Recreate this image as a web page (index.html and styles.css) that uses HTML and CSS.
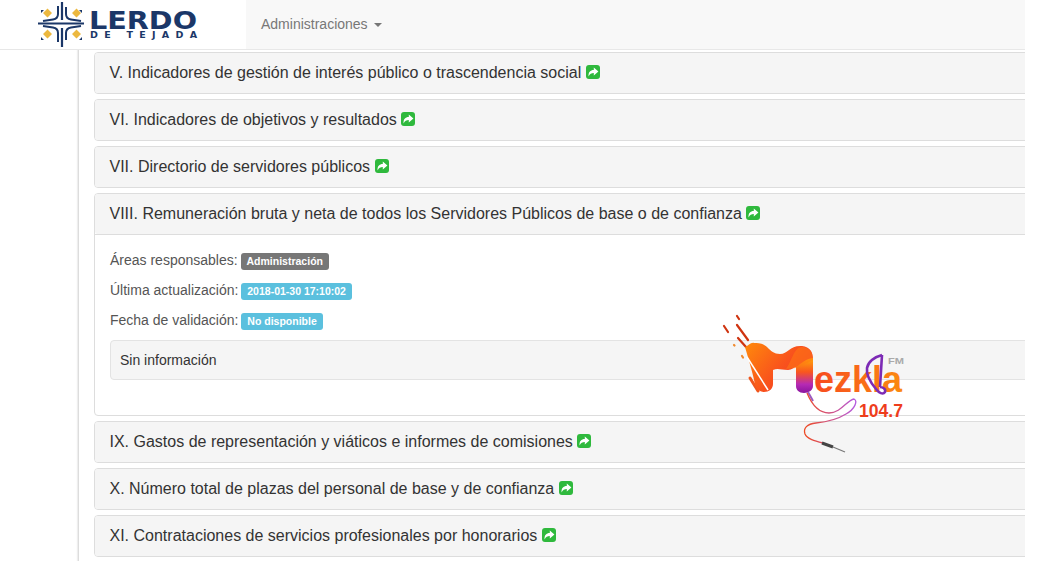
FILE: index.html
```html
<!DOCTYPE html>
<html lang="en">
<head>
    <meta charset="UTF-8">
    <meta name="viewport" content="width=device-width, initial-scale=1.0">
    <title>Transparencia - Lerdo de Tejada</title>
    <link rel="stylesheet" href="styles.css">
</head>
<body>
    <svg class="sprites" width="0" height="0">
        <symbol id="share" viewBox="0 0 14 14">
            <rect width="14" height="14" rx="3" fill="#2fb93d"/>
            <path d="M2.6 11.4c-.5-4 1.800-6.300 5.200-6.300V2.400L12.400 6.500 7.800 10.600V8c-2.400 0-4 .8-5.200 3.400z" fill="#fff"/>
        </symbol>
    </svg>
    <div class="page">
        <!-- Top bar -->
        <nav class="navbar">
            <a class="brand">
                <svg class="brand-logo" width="246" height="49" viewBox="0 0 246 49">
                    <path d="M43 13l4.500-4.500 4.500 4.500-4.500 4.500zM72 13l4.500-4.500 4.500 4.500-4.500 4.500zM43 34l4.500-4.500 4.500 4.500-4.500 4.500zM72 34l4.500-4.500 4.500 4.500-4.500 4.500z" fill="#ecb83f"/>
                    <path d="M41 10l3 0-3 3zM82 10l-3 0 3 3zM41 37l3 3h-3zM82 37l-3 3h3z" fill="#1b3768"/>
                    <g fill="none" stroke="#1b3768" stroke-width="2">
                        <path d="M58 6v8c0 3-2 5-5 5.500L43 21M66 7v7c0 3 2 5 5 5.500L81 21"/>
                        <path d="M43 26l10 1.500c3 .5 5 2.500 5 5.500v9M81 26l-10 1.500c-3 .5-5 2.500-5 5.500v7"/>
                        <path d="M38 23.500H84M62 2v18M62 28v19" stroke-width="2.200"/>
                    </g>
                    <text class="brand-name" x="89" y="29" textLength="108" lengthAdjust="spacingAndGlyphs">LERDO</text>
                    <text class="brand-sub" x="90" y="38" textLength="107">DE TEJADA</text>
                </svg>
            </a>
            <a class="nav-link">Administraciones <span class="caret"></span></a>
        </nav>

        <div class="layout">
            <div class="sidebar"></div>
            <main class="content">
                <div class="panel">
                    <div class="panel-heading">V. Indicadores de gestión de interés público o trascendencia social <svg class="share"><use href="#share"/></svg></div>
                </div>
                <div class="panel">
                    <div class="panel-heading">VI. Indicadores de objetivos y resultados <svg class="share"><use href="#share"/></svg></div>
                </div>
                <div class="panel">
                    <div class="panel-heading">VII. Directorio de servidores públicos <svg class="share"><use href="#share"/></svg></div>
                </div>
                <div class="panel">
                    <div class="panel-heading">VIII. Remuneración bruta y neta de todos los Servidores Públicos de base o de confianza <svg class="share"><use href="#share"/></svg></div>
                    <div class="panel-body">
                        <p class="meta">Áreas responsables: <span class="label label-gray">Administración</span></p>
                        <p class="meta">Última actualización: <span class="label label-info">2018-01-30 17:10:02</span></p>
                        <p class="meta">Fecha de validación: <span class="label label-info">No disponible</span></p>
                        <div class="well">Sin información</div>
                    </div>
                </div>
                <div class="panel">
                    <div class="panel-heading">IX. Gastos de representación y viáticos e informes de comisiones <svg class="share"><use href="#share"/></svg></div>
                </div>
                <div class="panel">
                    <div class="panel-heading">X. Número total de plazas del personal de base y de confianza <svg class="share"><use href="#share"/></svg></div>
                </div>
                <div class="panel">
                    <div class="panel-heading">XI. Contrataciones de servicios profesionales por honorarios <svg class="share"><use href="#share"/></svg></div>
                </div>
            </main>
        </div>
    </div>

    <!-- Station watermark over the page -->
    <svg class="watermark" width="200" height="150" viewBox="720 310 200 150">
        <defs>
            <linearGradient id="mGrad" x1="0" y1="0" x2="1" y2="0.6">
                <stop offset="0" stop-color="#ff8a0c"/>
                <stop offset="0.6" stop-color="#f9531c"/>
                <stop offset="1" stop-color="#f2392c"/>
            </linearGradient>
            <linearGradient id="stemGrad" x1="0" y1="0" x2="0" y2="1">
                <stop offset="0" stop-color="#ffa808"/>
                <stop offset="0.4" stop-color="#f9561e"/>
                <stop offset="0.75" stop-color="#b62ab4"/>
                <stop offset="1" stop-color="#8a159f"/>
            </linearGradient>
            <linearGradient id="textGrad" x1="0" y1="0" x2="1" y2="0">
                <stop offset="0" stop-color="#f74a1f"/>
                <stop offset="1" stop-color="#fb8a10"/>
            </linearGradient>
            <linearGradient id="cableGrad" x1="0" y1="0" x2="1" y2="0">
                <stop offset="0" stop-color="#ee4a22"/>
                <stop offset="1" stop-color="#b45be0"/>
            </linearGradient>
        </defs>
        <g fill="none" stroke="#cf3410" stroke-width="2.200" stroke-linecap="round">
            <path d="M737 316l2 3M724 326l4 6M737 325l11 15M738 338l8 9"/>
            <path d="M734 345l.5.5M742 356l1 1.500" stroke="#f08a2c"/>
            <path d="M750 378l8 13" stroke="#f0561c" stroke-width="3"/>
        </g>
        <!-- M body, right stem on its own gradient -->
        <path d="M745 347c3-1 6-5 9-4 4 0 9 0 13 4 4 4 7 7 13 7 8 0 10-9 22-8 8 1 11 6 11 13v8h-17c-2 0-4 3-8 3-7 0-10-2-15 0v14c0 5-4 8-9 8-5 0-8-4-9-7-1-8-6-24-10-38z" fill="url(#mGrad)"/>
        <path d="M796 367c6-4 9-8 17-9v28c0 4-4 7-9 7-5 0-8-3-8-7z" fill="url(#stemGrad)"/>
        <path d="M802 347c7 0 11 5 11 13l-17 8c-4 0-7 1-10 1 6-8 8-22 16-22z" fill="#ff7a12" opacity="0.55"/>
        <path d="M747 357l21 33" stroke="#fff" stroke-width="1.500"/>
        <path d="M808 392l5 9" stroke="#9a5bc0" stroke-width="2"/>
        <text x="814" y="392" class="logo-letters" fill="url(#textGrad)" textLength="88" lengthAdjust="spacingAndGlyphs">ezkla</text>
        <path d="M882 355c-8 2-14 7-15 13-1 7 4 15 9 21 3 4 7 6 9 3 1-3-2-5-5-5M882 355l-2 32" fill="none" stroke="#7d2bb5" stroke-width="2.600"/>
        <text x="888" y="364" class="logo-fm" textLength="16" lengthAdjust="spacingAndGlyphs">FM</text>
        <text x="859" y="417" class="logo-freq" textLength="44" lengthAdjust="spacingAndGlyphs">104.7</text>
        <path d="M807 393c5 12 12 20 22 20 12 0 18-13 25-14 4 2 1 10-8 15-8 5-20 8-30 9-9 1-13 5-11 11 2 5 10 7 18 9" fill="none" stroke="url(#cableGrad)" stroke-width="1.300"/>
        <path d="M822 443l11 4" stroke="#444" stroke-width="3"/>
        <path d="M833 447l12 5" stroke="#777" stroke-width="1.200"/>
    </svg>
</body>
</html>
```

FILE: styles.css
```css
html, body {
    margin: 0;
    padding: 0;
    height: 561px;
    overflow: hidden;
    background-color: #fff;
}
body {
    font-family: "Liberation Sans", Arial, sans-serif;
    font-size: 14px;
    color: #333;
    position: relative;
}
.sprites {
    display: block;
    height: 0;
}
.page {
    width: 1025px;
    overflow: hidden;
}
.navbar {
    display: flex;
    align-items: center;
    height: 49px;
    background-color: #f8f8f8;
    border-bottom: 1px solid #e7e7e7;
}
.brand {
    display: block;
    width: 246px;
    height: 49px;
    background-color: #fff;
}
.brand-logo {
    display: block;
}
.brand-name {
    font-family: "DejaVu Sans", sans-serif;
    font-size: 25px;
    font-weight: bold;
    fill: #1b3768;
}
.brand-sub {
    font-family: "DejaVu Sans", sans-serif;
    font-size: 9.5px;
    font-weight: bold;
    fill: #1b3768;
}
.nav-link {
    margin-left: 15px;
    margin-top: -1px;
    color: #777;
}
.caret {
    display: inline-block;
    width: 0;
    height: 0;
    margin-left: 2px;
    vertical-align: middle;
    border-top: 4px solid #777;
    border-right: 4px solid transparent;
    border-left: 4px solid transparent;
}
.layout {
    display: flex;
}
.sidebar {
    flex: none;
    width: 78px;
}
.content {
    box-sizing: border-box;
    flex: none;
    width: 1100px;
    height: 511px;
    padding: 2px 0 0 15px;
    border-left: 1px solid #ddd;
    box-shadow: -1px 0 1px #eee;
}
.panel {
    margin-bottom: 5px;
    background-color: #fff;
    border: 1px solid #ddd;
    border-radius: 4px;
}
.panel-heading {
    height: 20px;
    padding: 11px 15px 9px 14.5px;
    font-size: 16px;
    line-height: 18px;
    background-color: #f5f5f5;
    border-radius: 3px;
}
.panel-body {
    padding: 15px;
    height: 150px;
    border-top: 1px solid #ddd;
}
.share {
    width: 14px;
    height: 14px;
    vertical-align: -1px;
}
.meta {
    margin: 0 0 10px;
    height: 20px;
    line-height: 20px;
    color: #555;
}
.label {
    display: inline-block;
    margin-left: -1px;
    padding: 2px 6px 3px;
    font-size: 10.5px;
    font-weight: bold;
    line-height: 12px;
    color: #fff;
    border-radius: 3px;
}
.label-gray {
    background-color: #777;
}
.label-info {
    background-color: #5bc0de;
}
.well {
    box-sizing: border-box;
    height: 40px;
    padding: 10px 9px;
    line-height: 18px;
    background-color: #f5f5f5;
    border: 1px solid #e3e3e3;
    border-radius: 4px;
}
.watermark {
    position: absolute;
    left: 720px;
    top: 310px;
}
.logo-letters {
    font-family: "Liberation Sans", sans-serif;
    font-size: 36px;
    font-weight: bold;
}
.logo-fm {
    font-family: "Liberation Sans", sans-serif;
    font-size: 8.5px;
    font-weight: bold;
    fill: #aaa;
}
.logo-freq {
    font-family: "Liberation Sans", sans-serif;
    font-size: 18px;
    font-weight: bold;
    fill: #ee3d1c;
}
```
